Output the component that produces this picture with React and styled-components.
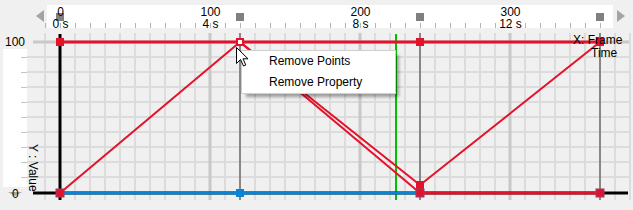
import React from 'react';
import styled, { createGlobalStyle } from 'styled-components';

const GlobalStyle = createGlobalStyle`
  html, body { margin: 0; padding: 0; background: #f0f0f0; }
  body { font-family: "Liberation Sans", Arial, sans-serif; font-size: 12px; color: #000; }
`;

const RED = '#e3122b';
const BLUE = '#0a84d4';

// frame -> px (page coords)
const fx = (f) => 60 + f * 1.5;

const Editor = styled.div`
  position: relative;
  width: 633px;
  height: 210px;
  overflow: hidden;
  background: #f0f0f0;
  display: grid;
  grid-template-columns: 27px 606px;
  grid-template-rows: 33px 177px;
`;

const TimeBar = styled.div`
  grid-column: 1 / -1;
  display: flex;
  align-items: flex-start;
  padding: 5px 0 0 36px;
`;

const Arrow = styled.div`
  width: 0;
  height: 0;
  margin-top: 5px;
  border-top: 6.5px solid transparent;
  border-bottom: 6.5px solid transparent;
  ${(p) => (p.$dir === 'left'
    ? 'border-right: 8px solid #a3a3a3; margin-right: 3px;'
    : 'border-left: 8px solid #a3a3a3; margin-left: 4px;')}
`;

const Strip = styled.div`
  width: 566px;
  height: 23px;
  background: #fff;
  svg { display: block; overflow: visible; }
`;

const ValueColumn = styled.div`
  display: flex;
  flex-direction: column;
`;

const ValueTop = styled.div`
  height: 16px;
  box-sizing: border-box;
  padding-top: 3px;
  line-height: 13px;
  text-align: center;
  padding-left: 3px;
`;

const ValueRuler = styled.div`
  width: 24px;
  height: 138px;
  margin-left: 3px;
  background: #fff;
  svg { display: block; }
`;

const ZeroRow = styled.div`
  position: relative;
  z-index: 0;
  height: 23px;
`;

const ZeroLabel = styled.span`
  position: absolute;
  left: 12px;
  top: 0;
  line-height: 13px;
  padding-top: 1px;
  &::before {
    content: '';
    position: absolute;
    left: -4px;
    top: 5px;
    border-left: 7px solid transparent;
    border-right: 7px solid transparent;
    border-top: 4px solid rgba(150, 150, 150, 0.8);
    z-index: -1;
  }
`;

const Plot = styled.svg`
  display: block;
  overflow: hidden;
`;

const Menu = styled.ul`
  position: absolute;
  left: 241px;
  top: 50px;
  width: 153px;
  margin: 0;
  padding: 0;
  list-style: none;
  background: #fff;
  border: 1px solid #cfcfcf;
  box-shadow: 4px 4px 3px -1px rgba(0, 0, 0, 0.35);
`;

const MenuItem = styled.li`
  height: 21px;
  line-height: 21px;
  padding-left: 27px;
  font-size: 12px;
  white-space: nowrap;
`;

const Cursor = styled.svg`
  position: absolute;
  left: 236px;
  top: 47px;
`;

const Square = ({ x, y, fill = RED, stroke, size = 8 }) => (
  <rect x={x - size / 2} y={y - size / 2} width={size} height={size} fill={fill} stroke={stroke} strokeWidth={stroke ? 1 : 0} />
);

const TimeRuler = () => {
  const ticks = [];
  for (let x = 45; x <= 600; x += 15) ticks.push(x);
  return (
    <Strip>
      <svg width="566" height="23" viewBox="47 5 566 23">
        {ticks.map((x) => (
          <line key={x} x1={x + 0.5} x2={x + 0.5} y1={23} y2={28} stroke="#b4b4b4" />
        ))}
        {[0, 120, 240, 360].map((f) => (
          <rect key={f} x={fx(f) - 4} y={13} width={8} height={8} fill="#808080" />
        ))}
        {[0, 100, 200, 300].map((f) => (
          <g key={f} fontFamily="Liberation Sans, Arial, sans-serif" fontSize="12" textAnchor="middle">
            <text x={fx(f) + 0.5} y={16}>{f}</text>
            <text x={fx(f) + 0.5} y={28}>{`${f / 25} s`}</text>
          </g>
        ))}
      </svg>
    </Strip>
  );
};

const ValueAxis = () => {
  const ticks = [];
  for (let y = 57; y <= 177; y += 15) ticks.push(y - 49);
  return (
    <ValueColumn>
      <ValueTop>100</ValueTop>
      <ValueRuler>
        <svg width="24" height="138">
          {ticks.map((y) => (
            <line key={y} x1={18} x2={24} y1={y + 0.5} y2={y + 0.5} stroke="#c4c4c4" />
          ))}
        </svg>
      </ValueRuler>
      <ZeroRow>
        <ZeroLabel>0</ZeroLabel>
      </ZeroRow>
    </ValueColumn>
  );
};

const Graph = () => {
  const minorX = [];
  for (let x = 45; x <= 630; x += 15) if (![60, 210, 360, 510].includes(x)) minorX.push(x);
  const minorY = [];
  for (let y = 57; y <= 177; y += 15) minorY.push(y);

  return (
    <Plot width="606" height="177" viewBox="27 33 606 177">
      {minorX.map((x) => (
        <line key={`vx${x}`} x1={x} x2={x} y1={33} y2={200} stroke="#dcdcdc" strokeWidth="2" />
      ))}
      {minorY.map((y) => (
        <line key={`hy${y}`} x1={27} x2={630} y1={y} y2={y} stroke="#dcdcdc" strokeWidth="2" />
      ))}
      {[210, 360, 510].map((x) => (
        <line key={`mx${x}`} x1={x} x2={x} y1={33} y2={200} stroke="#c8c8c8" strokeWidth="3" />
      ))}
      <line x1={33} x2={629} y1={42} y2={42} stroke="#c8c8c8" strokeWidth="3" />

      {[240, 420, 600].map((x) => (
        <line key={`k${x}`} x1={x} x2={x} y1={33} y2={200} stroke="#878787" strokeWidth="2" />
      ))}
      <line x1={396} x2={396} y1={34} y2={200} stroke="#00c000" strokeWidth="2" />

      <line x1={33} x2={628} y1={193} y2={193} stroke="#000" strokeWidth="3" />
      <line x1={60} x2={60} y1={34} y2={200} stroke="#000" strokeWidth="3" />

      <line x1={60} x2={420} y1={193} y2={193} stroke={BLUE} strokeWidth="3" />
      <line x1={420} x2={600} y1={193} y2={193} stroke={RED} strokeWidth="3" />
      <line x1={60} x2={600} y1={42} y2={42} stroke={RED} strokeWidth="3" />
      <g stroke={RED} strokeWidth="2" fill="none">
        <line x1={60} y1={193} x2={240} y2={42} />
        <line x1={240} y1={42} x2={420} y2={185} />
        <line x1={240} y1={42} x2={420} y2={193} />
        <line x1={420} y1={185} x2={600} y2={42} />
      </g>

      <Square x={60} y={42} />
      <Square x={420} y={42} />
      <Square x={600} y={42} />
      <rect x={237} y={39} width={6} height={6} fill="#fff" stroke={RED} strokeWidth="2" />
      <Square x={420} y={185} />
      <Square x={60} y={193} stroke="#9a3a6e" />
      <Square x={420} y={193} stroke="#9a3a6e" />
      <Square x={600} y={193} stroke="#9a3a6e" />
      <Square x={240} y={193} fill={BLUE} />

      <g fontFamily="Liberation Sans, Arial, sans-serif" fontSize="12" fill="#000">
        <text x={573} y={43.5}>X: Frame</text>
        <text x={591} y={56.5}>Time</text>
        <text x={29} y={144} transform="rotate(90 29 144)">Y : Value</text>
      </g>
    </Plot>
  );
};

export default function App() {
  return (
    <>
      <GlobalStyle />
      <Editor>
        <TimeBar>
          <Arrow $dir="left" />
          <TimeRuler />
          <Arrow $dir="right" />
        </TimeBar>
        <ValueAxis />
        <Graph />
        <Menu>
          <MenuItem>Remove Points</MenuItem>
          <MenuItem>Remove Property</MenuItem>
        </Menu>
        <Cursor width="13" height="20" viewBox="0 0 13 20">
          <path d="M0.5 0.5 L0.5 16.5 L4.5 12.5 L7.5 19 L9.8 18 L7 11.8 L12 11.8 Z" fill="#fff" stroke="#000" strokeWidth="1" strokeLinejoin="miter" />
        </Cursor>
      </Editor>
    </>
  );
}
